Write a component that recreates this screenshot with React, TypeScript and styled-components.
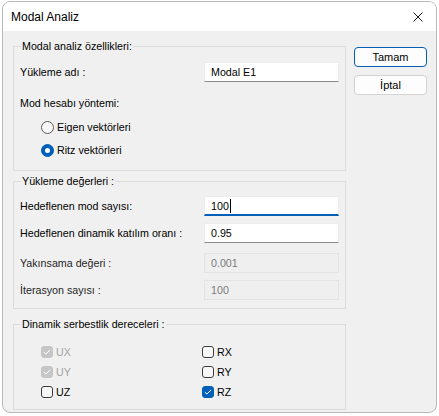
import React from "react";
import styled, { createGlobalStyle, css } from "styled-components";

const Global = createGlobalStyle`
  html, body { margin: 0; padding: 0; background: #ffffff; }
  body { font-family: "Liberation Sans", Arial, sans-serif; font-size: 10.7px; color: #000; }
  * { box-sizing: border-box; }
`;

const Window = styled.div`
  margin: 1px 2px 0 2px;
  width: 435px;
  height: 412px;
  border: 1px solid #b9b9b9;
  border-radius: 8px;
  overflow: hidden;
  display: flex;
  flex-direction: column;
  background: #f0f0f0;
`;

const TitleBar = styled.div`
  height: 29px;
  background: #ffffff;
  display: flex;
  align-items: center;
  justify-content: space-between;
  padding: 0 10px 0 8px;
`;

const Title = styled.span`
  font-size: 12px;
  color: #000;
`;

const Close = styled.svg`
  width: 10px;
  height: 10px;
  margin-right: 3px;
`;

const Body = styled.div`
  flex: 1;
  display: flex;
  gap: 8px;
  padding: 15px 0 0 10px;
`;

const Column = styled.div`
  width: 333px;
  display: flex;
  flex-direction: column;
`;

const Group = styled.div<{ $h: number; $mt?: number; $pt: number }>`
  position: relative;
  height: ${(p) => p.$h}px;
  margin-top: ${(p) => p.$mt ?? 0}px;
  border: 1px solid #dcdcdc;
  padding: ${(p) => p.$pt}px 6px 0 6px;
  display: flex;
  flex-direction: column;
`;

const Legend = styled.span`
  position: absolute;
  top: -9px;
  left: 7px;
  padding: 0 1px;
  background: #f0f0f0;
  line-height: 16px;
  color: #000;
  white-space: nowrap;
`;

const FieldRow = styled.div<{ $mt?: number }>`
  display: flex;
  align-items: center;
  justify-content: space-between;
  height: 20px;
  margin-top: ${(p) => p.$mt ?? 0}px;
`;

const Label = styled.span<{ $muted?: boolean }>`
  color: ${(p) => (p.$muted ? "#1f1f1f" : "#000")};
  line-height: 16px;
  white-space: nowrap;
`;

const Input = styled.div<{ $state: "normal" | "focus" | "disabled" }>`
  flex: none;
  width: 135px;
  height: 20px;
  padding: 0 6px;
  display: flex;
  align-items: center;
  ${(p) =>
    p.$state === "disabled"
      ? css`
          background: #efefef;
          border: 1px solid #e3e3e3;
          color: #7a7a7a;
        `
      : css`
          background: #ffffff;
          border: 1px solid #ececec;
          border-bottom: ${p.$state === "focus" ? "2px solid #005fb8" : "1px solid #8a8a8a"};
          color: #000;
        `}
`;

const Caret = styled.span`
  display: inline-block;
  width: 1px;
  height: 14px;
  background: #000;
  margin-left: 1px;
`;

const TextRow = styled.div<{ $mt: number }>`
  margin-top: ${(p) => p.$mt}px;
  line-height: 16px;
`;

const RadioRow = styled.label<{ $mt: number }>`
  margin-top: ${(p) => p.$mt}px;
  margin-left: 21px;
  display: flex;
  align-items: center;
  gap: 3px;
  height: 16px;
  line-height: 16px;
`;

const RadioDot = styled.span<{ $on?: boolean }>`
  width: 13px;
  height: 13px;
  border-radius: 50%;
  display: inline-flex;
  align-items: center;
  justify-content: center;
  ${(p) =>
    p.$on
      ? css`
          background: #005fb8;
          border: 1px solid #005fb8;
          &::after {
            content: "";
            width: 5px;
            height: 5px;
            border-radius: 50%;
            background: #fff;
          }
        `
      : css`
          background: #f7f7f7;
          border: 1px solid #5a5a5a;
        `}
`;

const CheckGrid = styled.div`
  display: grid;
  grid-template-columns: 161px 1fr;
  grid-auto-rows: 20px;
  margin-left: 21px;
`;

const CheckItem = styled.div<{ $disabled?: boolean }>`
  display: flex;
  align-items: center;
  gap: 3px;
  color: ${(p) => (p.$disabled ? "#a3a3a3" : "#000")};
`;

const Box = styled.span<{ $kind: "off" | "on" | "dis" }>`
  width: 12px;
  height: 12px;
  border-radius: 3px;
  display: inline-flex;
  align-items: center;
  justify-content: center;
  ${(p) =>
    p.$kind === "on"
      ? css`background: #005fb8; border: 1px solid #005fb8;`
      : p.$kind === "dis"
      ? css`background: #c6c6c6; border: 1px solid #c6c6c6;`
      : css`background: #f7f7f7; border: 1px solid #3c3c3c;`}
`;

const Buttons = styled.div`
  display: flex;
  flex-direction: column;
  gap: 8px;
  padding-top: 1px;
`;

const Button = styled.button<{ $primary?: boolean }>`
  width: 73px;
  height: 20px;
  padding: 0;
  font-family: inherit;
  font-size: 11px;
  color: #000;
  background: #fdfdfd;
  border: 1px solid ${(p) => (p.$primary ? "#005fb8" : "#d3d3d3")};
  border-radius: 4px;
`;

const Check = () => (
  <svg width="8" height="6" viewBox="0 0 8 6">
    <path d="M0.8 3.1 L2.9 5 L7.2 0.9" fill="none" stroke="#fff" strokeWidth="1" />
  </svg>
);

const CheckBox = ({ kind, label, disabled }: { kind: "off" | "on" | "dis"; label: string; disabled?: boolean }) => (
  <CheckItem $disabled={disabled}>
    <Box $kind={kind}>{kind !== "off" && <Check />}</Box>
    {label}
  </CheckItem>
);

export default function App() {
  return (
    <>
      <Global />
      <Window>
        <TitleBar>
          <Title>Modal Analiz</Title>
          <Close viewBox="0 0 10 10">
            <path d="M0.5 0.5 L9.5 9.5 M9.5 0.5 L0.5 9.5" stroke="#1a1a1a" strokeWidth="1" />
          </Close>
        </TitleBar>
        <Body>
          <Column>
            <Group $h={125} $pt={15}>
              <Legend>Modal analiz özellikleri:</Legend>
              <FieldRow>
                <Label>Yükleme adı :</Label>
                <Input $state="normal">Modal E1</Input>
              </FieldRow>
              <TextRow $mt={13}>Mod hesabı yöntemi:</TextRow>
              <RadioRow $mt={8}>
                <RadioDot />
                Eigen vektörleri
              </RadioRow>
              <RadioRow $mt={7}>
                <RadioDot $on />
                Ritz vektörleri
              </RadioRow>
            </Group>
            <Group $h={128} $mt={10} $pt={14}>
              <Legend>Yükleme değerleri :</Legend>
              <FieldRow>
                <Label>Hedeflenen mod sayısı:</Label>
                <Input $state="focus">
                  100
                  <Caret />
                </Input>
              </FieldRow>
              <FieldRow $mt={7}>
                <Label>Hedeflenen dinamik katılım oranı :</Label>
                <Input $state="normal">0.95</Input>
              </FieldRow>
              <FieldRow $mt={10}>
                <Label $muted>Yakınsama değeri :</Label>
                <Input $state="disabled">0.001</Input>
              </FieldRow>
              <FieldRow $mt={7}>
                <Label $muted>İterasyon sayısı :</Label>
                <Input $state="disabled">100</Input>
              </FieldRow>
            </Group>
            <Group $h={86} $mt={15} $pt={17}>
              <Legend>Dinamik serbestlik dereceleri :</Legend>
              <CheckGrid>
                <CheckBox kind="dis" label="UX" disabled />
                <CheckBox kind="off" label="RX" />
                <CheckBox kind="dis" label="UY" disabled />
                <CheckBox kind="off" label="RY" />
                <CheckBox kind="off" label="UZ" />
                <CheckBox kind="on" label="RZ" />
              </CheckGrid>
            </Group>
          </Column>
          <Buttons>
            <Button $primary>Tamam</Button>
            <Button>İptal</Button>
          </Buttons>
        </Body>
      </Window>
    </>
  );
}
